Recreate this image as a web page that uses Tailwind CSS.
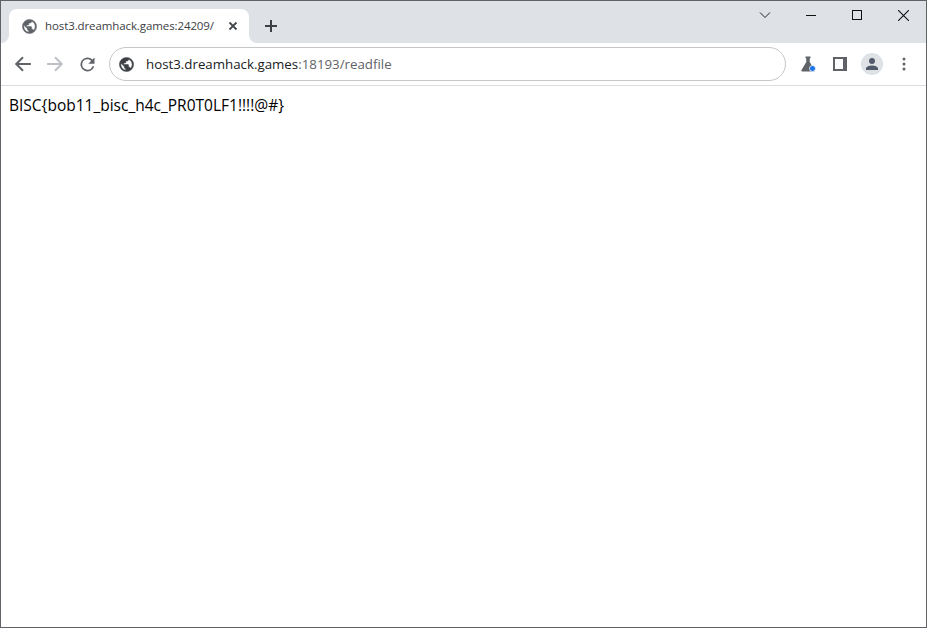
<!DOCTYPE html>
<html>
<head>
<meta charset="utf-8">
<script src="https://cdn.jsdelivr.net/npm/@tailwindcss/browser@4"></script>
</head>
<body class="bg-white">
<div class="w-[927px] h-[628px] border border-[#5f6368] flex flex-col overflow-hidden bg-white font-['Open_Sans',sans-serif]">
  <div class="h-[42px] shrink-0 bg-[#dee1e6] flex items-end pl-2 relative">
    <div class="w-[240px] h-[34px] bg-white rounded-t-lg flex items-center pl-[12px] pr-[11px] relative">
      <span class="absolute bottom-0 -left-2 w-2 h-2 bg-white"><span class="block w-2 h-2 bg-[#dee1e6] rounded-br-lg"></span></span>
      <span class="absolute bottom-0 -right-2 w-2 h-2 bg-white"><span class="block w-2 h-2 bg-[#dee1e6] rounded-bl-lg"></span></span>
      <svg class="w-[17px] h-[17px] shrink-0" viewBox="0 0 24 24" fill="#5f6368" stroke="#5f6368" stroke-width=".7"><path d="M12 2a10 10 0 1 0 0 20 10 10 0 0 0 0-20zM4 12c0-.6.1-1.2.2-1.8L9 15v1c0 1.1.9 2 2 2v2c-3.900-.5-7-3.900-7-8zm13.900 5.400c-.3-.8-1-1.400-1.900-1.400h-1v-3c0-.6-.4-1-1-1H8v-2h2c.6 0 1-.4 1-1V7h2c1.100 0 2-.9 2-2v-.4c2.900 1.200 5 4.100 5 7.400 0 2.100-.8 4-2.100 5.400z"/></svg>
      <span class="ml-[7px] w-[171px] overflow-hidden text-[11.5px] tracking-[-0.1px] leading-4 text-[#3c4043]">host3.dreamhack.games:24209/</span>
      <svg class="ml-auto w-[10px] h-[10px] shrink-0" viewBox="0 0 10 10" stroke="#45494d" stroke-width="1.800" fill="none"><path d="M1.500 1.500l7 7M8.500 1.500l-7 7"/></svg>
    </div>
    <svg class="w-3 h-3 ml-4 mb-[11px]" viewBox="0 0 12 12" stroke="#3c4043" stroke-width="2" fill="none"><path d="M6 0v12M0 6h12"/></svg>
    <div class="ml-auto self-start flex items-center h-[28px]">
      <svg class="w-[12px] h-[8px]" viewBox="0 0 12 8" stroke="#202124" fill="none"><path d="M1 1.500l5 5 5-5"/></svg>
      <div class="w-[46px] ml-[17px] flex justify-center"><svg class="w-[10px] h-[10px]" viewBox="0 0 10 10" stroke="#111" fill="none"><path d="M0 5.500h10"/></svg></div>
      <div class="w-[46px] flex justify-center"><svg class="w-[10px] h-[10px]" viewBox="0 0 10 10" stroke="#111" fill="none"><rect x=".5" y=".5" width="9" height="9"/></svg></div>
      <div class="w-[46px] flex justify-center"><svg class="w-[11px] h-[11px]" viewBox="0 0 10 10" stroke="#111" fill="none"><path d="M0 0l10 10M10 0L0 10"/></svg></div>
    </div>
  </div>
  <div class="h-[43px] shrink-0 bg-white border-b border-[#dadce0] flex items-center pl-[13px]">
    <svg class="w-[18px] h-[18px]" viewBox="0 0 16 16" fill="none" stroke="#5f6368" stroke-width="1.800"><path d="M15 8H2M8 2L2 8l6 6"/></svg>
    <svg class="w-[18px] h-[18px] ml-[14px]" viewBox="0 0 16 16" fill="none" stroke="#bdc1c6" stroke-width="1.800"><path d="M1 8h13M8 2l6 6-6 6"/></svg>
    <svg class="w-[21px] h-[21px] ml-[13px]" viewBox="0 0 24 24" fill="#5f6368"><path d="M17.650 6.350A8 8 0 1 0 19.730 14h-2.080A6 6 0 1 1 12 6c1.660 0 3.140.690 4.220 1.780L13 11h7V4l-2.350 2.350z"/></svg>
    <div class="ml-[11px] w-[677px] h-[34px] rounded-full border border-[#c4c7c5] flex items-center pl-[8px]">
      <svg class="w-[17px] h-[17px] shrink-0" viewBox="0 0 24 24" fill="#3c4043" stroke="#3c4043" stroke-width=".7"><path d="M12 2a10 10 0 1 0 0 20 10 10 0 0 0 0-20zM4 12c0-.6.1-1.200.2-1.800L9 15v1c0 1.100.9 2 2 2v2c-3.900-.5-7-3.900-7-8zm13.900 5.400c-.3-.8-1-1.400-1.900-1.400h-1v-3c0-.6-.4-1-1-1H8v-2h2c.6 0 1-.4 1-1V7h2c1.100 0 2-.9 2-2v-.4c2.900 1.200 5 4.100 5 7.400 0 2.100-.8 4-2.100 5.400z"/></svg>
      <span class="ml-[11px] text-[13.300px] leading-5 whitespace-nowrap text-[#202124]">host3.dreamhack.games<span class="text-[#5f6368]">:18193/readfile</span></span>
    </div>
    <svg class="ml-[13px] w-[18px] h-[18px]" viewBox="0 0 18 18"><path d="M6.500 1.500h5v1.500l-.8.500v3.500L15.500 15c.4.800 0 1.500-1 1.500h-11c-1 0-1.400-.7-1-1.500L7.300 7V3.500l-.8-.5z" fill="#5f6368"/><circle cx="13.500" cy="13.500" r="3" fill="#1a73e8" stroke="#fff" stroke-width=".8"/></svg>
    <svg class="ml-[16px] w-[14px] h-[14px]" viewBox="0 0 14 14"><path fill="#5f6368" fill-rule="evenodd" d="M0 0h14v14H0zM2 2v10h8V2z"/></svg>
    <div class="ml-[14px] w-[22px] h-[22px] rounded-full bg-[#dee1e6] flex items-center justify-center">
      <svg class="w-[14px] h-[14px]" viewBox="0 0 14 14" fill="#505a6b"><circle cx="7" cy="4" r="3"/><path d="M1 13v-1.500C1 9.500 4.500 8.500 7 8.500s6 1 6 3V13z"/></svg>
    </div>
    <svg class="ml-[19px] w-1 h-[14px]" viewBox="0 0 4 14" fill="#5f6368"><circle cx="2" cy="2" r="1.500"/><circle cx="2" cy="7" r="1.500"/><circle cx="2" cy="12" r="1.500"/></svg>
  </div>
  <div class="flex-1 px-2 pt-[7px] text-[15.500px] leading-6 text-black">BISC{bob11_bisc_h4c_PR0T0LF1!!!!@#}</div>
</div>
</body>
</html>
